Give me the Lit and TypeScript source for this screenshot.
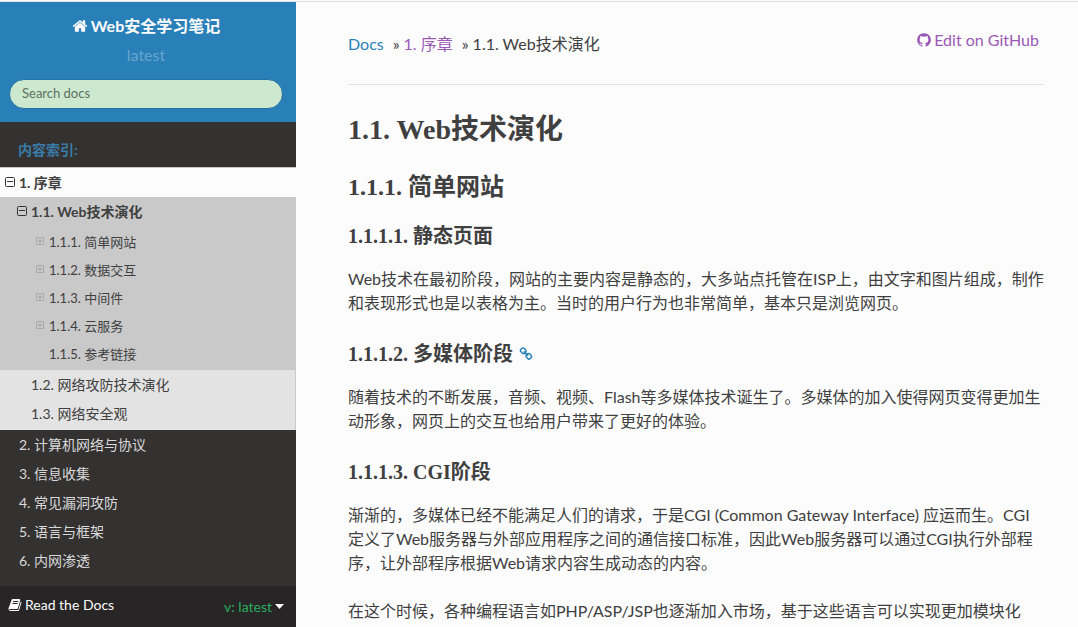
import { LitElement, html, css, svg, nothing } from "lit";
import { customElement } from "lit/decorators.js";
import { classMap } from "lit/directives/class-map.js";

const icons = {
  home: svg`<path d="M1472 992v480q0 26-19 45t-45 19h-384v-384h-256v384h-384q-26 0-45-19t-19-45v-480q0-1 .5-3t.5-3l575-474 575 474q1 2 1 6zm223-69l-62 74q-8 9-21 11h-3q-13 0-21-7l-692-577-692 577q-12 8-24 7-13-2-21-11l-62-74q-8-10-7-23.5t11-21.5l719-599q32-26 76-26t76 26l244 204v-195q0-14 9-23t23-9h192q14 0 23 9t9 23v408l219 182q10 8 11 21.5t-7 23.5z"/>`,
  github: svg`<path d="M896 128q209 0 385.5 103t279.5 279.5 103 385.5q0 251-146.5 451.5t-378.5 277.5q-27 5-40-7t-13-30q0-3 .5-76.5t.5-134.5q0-97-52-142 57-6 102.5-18t94-39 81-66.5 53-105 20.5-150.5q0-119-79-206 37-91-8-204-28-9-81 11t-92 44l-38 24q-93-26-192-26t-192 26q-16-11-42.5-27t-83.5-38.5-85-13.5q-45 113-8 204-79 87-79 206 0 85 20.5 150t52.5 105 80.5 67 94 39 102.5 18q-39 36-49 103-21 10-45 15t-57 5-65.5-21.5-55.5-62.5q-19-32-48.5-52t-49.5-24l-20-3q-21 0-29 4.5t-5 11.5 9 14 13 12l7 5q22 10 43.5 38t31.5 51l10 23q13 38 44 61.5t67 30 69.5 7 55.5-3.5l23-4q0 38 .5 88.5t.5 54.5q0 18-13 30t-40 7q-232-77-378.5-277.5t-146.5-451.5q0-209 103-385.5t279.5-279.5 385.5-103z"/>`,
  book: svg`<path d="M1703 478q40 57 18 129l-275 906q-19 64-76.5 107.5t-122.5 43.5h-923q-77 0-148.5-53.5t-99.5-131.5q-24-67-2-127 0-4 3-27t4-37q1-8-3-21.5t-3-19.5q2-11 8-21t16.5-23.5 16.5-23.5q23-38 45-91.5t30-91.5q3-10 .5-30t-.5-28q3-11 17-28t17-23q21-36 42-92t25-90q1-9-2.5-32t.5-28q4-13 22-30.5t22-22.5q19-26 42.5-84.5t27.5-96.5q1-8-3-25.5t-2-26.5q2-8 9-18t18-23 17-21q8-12 16.5-30.5t15-35 16-36 19.5-32 26.5-23.5 36-11.5 47.5 5.5l-1 3q38-9 51-9h761q74 0 114 56t18 130l-274 906q-36 119-71.5 153.5t-128.5 34.5h-869q-27 0-38 15-11 16-1 43 24 70 144 70h923q29 0 56-15.5t35-41.5l300-987q7-22 5-57 38 15 59 43zm-1064 2q-4 13 2 22.5t20 9.5h608q13 0 25.5-9.5t16.5-22.5l21-64q4-13-2-22.5t-20-9.5h-608q-13 0-25.5 9.5t-16.5 22.5zm-83 256q-4 13 2 22.5t20 9.5h608q13 0 25.5-9.5t16.5-22.5l21-64q4-13-2-22.5t-20-9.5h-608q-13 0-25.5 9.5t-16.5 22.5z"/>`,
  link: svg`<path d="M1520 1216q0-40-28-68l-208-208q-28-28-68-28-42 0-72 32 3 3 19 18.5t21.5 21.5 15 19 13 25.5 3.5 27.5q0 40-28 68t-68 28q-15 0-27.5-3.5t-25.5-13-19-15-21.5-21.5-18.5-19q-33 31-33 73 0 40 28 68l206 207q27 27 68 27 40 0 68-26l147-146q28-28 28-67zm-703-705q0-40-28-68l-206-207q-28-28-68-28-39 0-68 27l-147 146q-28 28-28 67 0 40 28 68l208 208q27 27 68 27 42 0 72-31-3-3-19-18.5t-21.5-21.5-15-19-13-25.5-3.5-27.5q0-40 28-68t68-28q15 0 27.5 3.5t25.5 13 19 15 21.5 21.5 18.5 19q33-31 33-73zm895 705q0 120-85 203l-147 146q-83 83-203 83-121 0-204-85l-206-207q-83-83-83-203 0-123 88-209l-88-88q-86 88-208 88-120 0-204-84l-208-208q-84-84-84-204t85-203l147-146q83-83 203-83 121 0 204 85l206 207q83 83 83 203 0 123-88 209l88 88q86-88 208-88 120 0 204 84l208 208q84 84 84 204z"/>`,
};

const icon = (name: keyof typeof icons) =>
  html`<svg class="icon icon-${name}" viewBox="0 0 1792 1792" aria-hidden="true">${icons[name]}</svg>`;

const toggle = (open: boolean) => html`
  <button class="toggle" type="button" aria-expanded=${open ? "true" : "false"} aria-label=${open ? "收起" : "展开"}>
    <svg class="box" viewBox="0 0 10 10" aria-hidden="true">
      <rect x="0.5" y="0.5" width="9" height="9" rx="1"></rect>
      <path d=${open ? "M2 4.5H8" : "M2.5 5H7.5M5 2.5V7.5"}></path>
    </svg>
  </button>`;

interface Entry {
  label: string;
  open?: boolean;
  current?: boolean;
  children?: Entry[];
}

const toc: Entry[] = [
  {
    label: "1. 序章",
    open: true,
    current: true,
    children: [
      {
        label: "1.1. Web技术演化",
        open: true,
        current: true,
        children: [
          { label: "1.1.1. 简单网站", open: false },
          { label: "1.1.2. 数据交互", open: false },
          { label: "1.1.3. 中间件", open: false },
          { label: "1.1.4. 云服务", open: false },
          { label: "1.1.5. 参考链接" },
        ],
      },
      { label: "1.2. 网络攻防技术演化" },
      { label: "1.3. 网络安全观" },
    ],
  },
  { label: "2. 计算机网络与协议" },
  { label: "3. 信息收集" },
  { label: "4. 常见漏洞攻防" },
  { label: "5. 语言与框架" },
  { label: "6. 内网渗透" },
];

@customElement("docs-sidebar")
class DocsSidebar extends LitElement {
  static styles = css`
    :host {
      display: flex;
      flex-direction: column;
      height: 100%;
      background: #343131;
      font-size: 14px;
    }
    * { box-sizing: border-box; }
    a { color: inherit; text-decoration: none; }
    ul { list-style: none; margin: 0; padding: 0; }
    .icon { width: 16px; height: 16px; fill: currentColor; flex: none; }
    .head {
      display: flex;
      flex-direction: column;
      background: #2980b9;
      padding: 11px 13px 13px 9px;
      text-align: center;
      font-size: 16px;
      line-height: 24px;
    }
    .home {
      display: flex;
      align-items: center;
      justify-content: center;
      gap: 3px;
      color: #fcfcfc;
      font-weight: 700;
      height: 26px;
    }
    .version { color: rgba(255, 255, 255, 0.3); padding: 4px 0 12px; }
    .search {
      display: block;
      width: 100%;
      height: 30px;
      margin: 0;
      padding: 0 12px 3px;
      border: 1px solid #2472a4;
      border-radius: 15px;
      background: #cce8cf;
      color: #333;
      font-family: inherit;
      font-size: 13px;
      outline: none;
    }
    .search::placeholder { color: #5f7062; opacity: 1; }
    .menu { flex: 1; min-height: 0; overflow: hidden; }
    .caption {
      margin: 0;
      padding: 12px 18px 1px;
      color: #3a7ca8;
      font-size: 14px;
      line-height: 32px;
      font-weight: 700;
    }
    .row { display: flex; align-items: center; height: 29px; color: #d9d9d9; }
    .toggle {
      display: flex;
      align-items: center;
      justify-content: flex-end;
      height: 100%;
      margin: 0;
      padding: 0 4px 2px 0;
      border: 0;
      background: none;
      color: #333;
      flex: none;
    }
    .box { width: 10px; height: 10px; fill: none; stroke: currentColor; stroke-width: 1; }
    .lead { flex: none; display: flex; justify-content: flex-end; height: 100%; }
    .l1 .lead { width: 19px; }
    .l2 .lead { width: 31px; }
    .l3 .lead { width: 49px; }
    .l1.current { height: 30px; background: #fcfcfc; border-top: 1px solid #c9c9c9; }
    .l2.current { height: 30px; }
    .current { color: #404040; font-weight: 700; }
    .l2, .l3 { color: #404040; }
    .l3 { height: 28px; font-size: 13px; }
    .l3 .toggle { color: #999; padding-right: 5px; }
    .l3 .box { width: 8px; height: 8px; }
    .sub1 { background: #e3e3e3; border-right: 1px solid #c9c9c9; padding-bottom: 2px; }
    .sub2 { padding: 1px 0 2px; }
    .branch { background: #c9c9c9; }
    .foot {
      display: flex;
      align-items: center;
      justify-content: space-between;
      height: 41px;
      padding: 0 12px 4px 8px;
      background: #272525;
      color: #fcfcfc;
    }
    .brand { display: flex; align-items: center; gap: 3px; }
    .icon-book { width: 14px; height: 14px; }
    .current-version {
      display: flex;
      align-items: center;
      gap: 3px;
      margin: 0;
      padding: 3px 0 0;
      border: 0;
      background: none;
      color: #27ae60;
      font-family: inherit;
      font-size: 14px;
    }
    .caret { width: 9px; height: 5px; fill: #fcfcfc; }
  `;

  private entry(e: Entry, level: number): unknown {
    return html`
      <li class=${classMap({ branch: level === 2 && !!e.current })}>
        <div class="row l${level} ${e.current ? "current" : ""}">
          <span class="lead">${e.open === undefined ? nothing : toggle(e.open)}</span>
          <a href="#">${e.label}</a>
        </div>
        ${e.children
          ? html`<ul class="sub${level}">${e.children.map((c) => this.entry(c, level + 1))}</ul>`
          : nothing}
      </li>`;
  }

  render() {
    return html`
      <div class="head">
        <a class="home" href="#">${icon("home")}<span>Web安全学习笔记</span></a>
        <div class="version">latest</div>
        <input class="search" type="text" placeholder="Search docs" aria-label="Search docs" />
      </div>
      <nav class="menu" aria-label="内容索引">
        <p class="caption">内容索引:</p>
        <ul>${toc.map((e) => this.entry(e, 1))}</ul>
      </nav>
      <div class="foot">
        <span class="brand">${icon("book")}<span>Read the Docs</span></span>
        <button class="current-version" type="button">
          <span>v: latest</span>
          <svg class="caret" viewBox="0 0 9 5" aria-hidden="true"><path d="M0 0H9L4.5 5Z"></path></svg>
        </button>
      </div>`;
  }
}

@customElement("docs-article")
class DocsArticle extends LitElement {
  static styles = css`
    :host { display: block; max-width: 800px; }
    a { color: #2980b9; text-decoration: none; }
    .icon { width: 16px; height: 16px; fill: currentColor; flex: none; }
    .top {
      display: flex;
      justify-content: space-between;
      align-items: flex-start;
      padding-bottom: 28px;
      margin-bottom: 24px;
      border-bottom: 1px solid #e1e4e5;
    }
    .crumbs { display: flex; list-style: none; margin: 0; padding: 4px 0 0; gap: 9px; }
    .crumbs li { display: flex; gap: 4px; }
    .visited { color: #9b59b6; }
    .edit { display: flex; align-items: center; gap: 2px; padding-right: 5px; }
    h1, h2, h3 {
      margin: 0 0 16px;
      font-family: "Roboto Slab", "Liberation Serif", "Noto Sans CJK SC", serif;
      font-weight: 700;
    }
    h1 { font-size: 28px; line-height: 42px; margin-bottom: 18px; }
    h2 { font-size: 24px; line-height: 36px; }
    h3 { display: flex; align-items: center; gap: 6px; font-size: 20px; line-height: 30px; }
    p { margin: 0 0 24px; }
    .anchor { display: flex; }
    .icon-link { width: 14px; height: 14px; }
    p:last-child { margin: 0; }
  `;

  render() {
    return html`
      <div class="top">
        <ul class="crumbs">
          <li><a href="#">Docs</a></li>
          <li><span>»</span><a class="visited" href="#">1. 序章</a></li>
          <li><span>»</span><span>1.1. Web技术演化</span></li>
        </ul>
        <a class="edit visited" href="#">${icon("github")}<span>Edit on GitHub</span></a>
      </div>
      <h1>1.1. Web技术演化</h1>
      <h2>1.1.1. 简单网站</h2>
      <h3>1.1.1.1. 静态页面</h3>
      <p>Web技术在最初阶段，网站的主要内容是静态的，大多站点托管在ISP上，由文字和图片组成，制作和表现形式也是以表格为主。当时的用户行为也非常简单，基本只是浏览网页。</p>
      <h3>1.1.1.2. 多媒体阶段<a class="anchor" href="#" aria-label="永久链接">${icon("link")}</a></h3>
      <p>随着技术的不断发展，音频、视频、Flash等多媒体技术诞生了。多媒体的加入使得网页变得更加生动形象，网页上的交互也给用户带来了更好的体验。</p>
      <h3>1.1.1.3. CGI阶段</h3>
      <p>渐渐的，多媒体已经不能满足人们的请求，于是CGI (Common Gateway Interface) 应运而生。CGI定义了Web服务器与外部应用程序之间的通信接口标准，因此Web服务器可以通过CGI执行外部程序，让外部程序根据Web请求内容生成动态的内容。</p>
      <p>在这个时候，各种编程语言如PHP/ASP/JSP也逐渐加入市场，基于这些语言可以实现更加模块化</p>`;
  }
}

@customElement("app-root")
class AppRoot extends LitElement {
  static styles = css`
    :host {
      display: flex;
      flex-direction: column;
      box-sizing: border-box;
      height: 100vh;
      overflow: hidden;
      background: #fcfcfc;
      color: #404040;
      font-family: Lato, "Noto Sans CJK SC", sans-serif;
      font-size: 16px;
      line-height: 24px;
    }
    .edge { height: 1px; flex: none; border-bottom: 1px solid #e1e2e4; }
    .page { flex: 1; min-height: 0; display: grid; grid-template-columns: 296px minmax(0, 1fr); }
    .side { min-height: 0; }
    .main { min-height: 0; overflow: hidden; padding: 26px 34px 0 52px; }
  `;

  render() {
    return html`
      <div class="edge"></div>
      <div class="page">
        <docs-sidebar class="side"></docs-sidebar>
        <main class="main"><docs-article></docs-article></main>
      </div>`;
  }
}
